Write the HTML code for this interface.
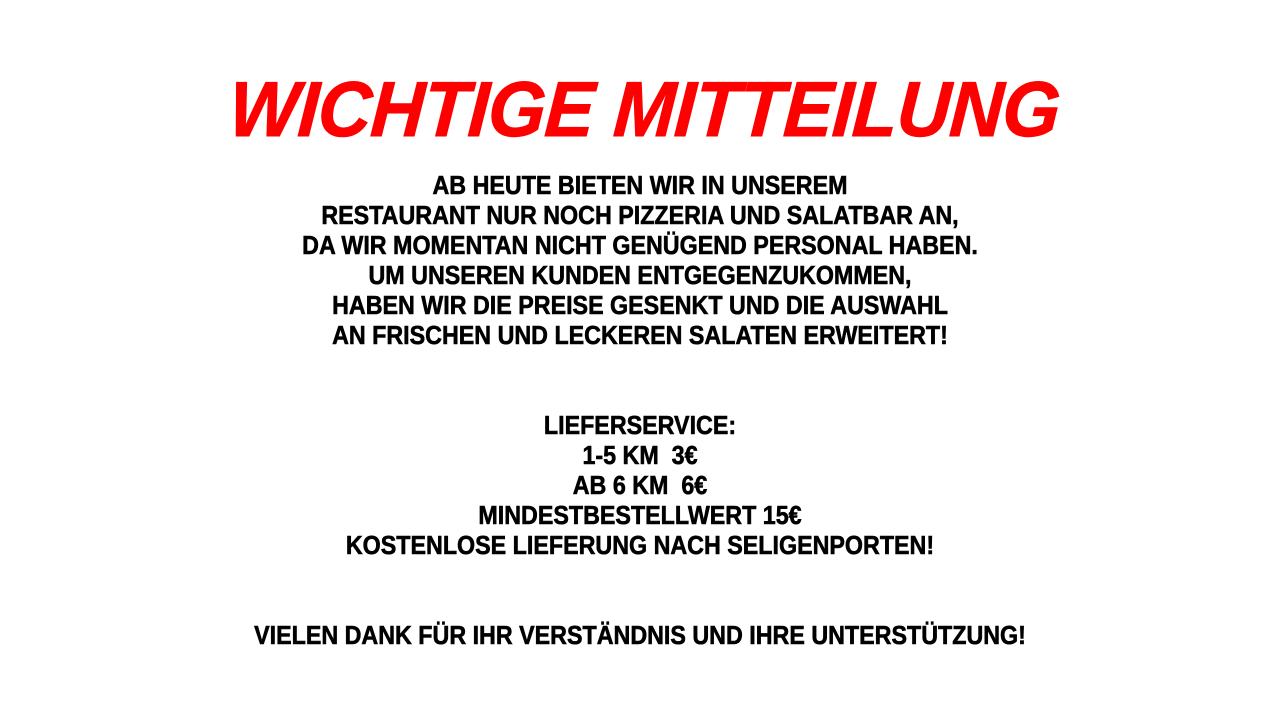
<!DOCTYPE html>
<html><head><meta charset="utf-8"><style>
html,body{margin:0;padding:0;background:#fff;width:1280px;height:720px;overflow:hidden}
.t{position:absolute;left:0;width:1280px;text-align:center;font-family:"Liberation Sans",sans-serif;font-weight:bold;text-transform:uppercase;white-space:nowrap}
#title{top:69px;font-size:78px;line-height:80px;color:#f00;font-style:italic;transform:translateX(7px) scaleX(0.945) skewX(-4deg);transform-origin:645px 0;letter-spacing:-0.5px;-webkit-text-stroke:1px #f00}
#body{top:170px;font-size:26px;line-height:30px;color:#000;transform:translateX(0px) scaleX(0.895);transform-origin:640px 0;-webkit-text-stroke:0.6px #000}
</style></head><body>
<div class="t" id="title">Wichtige Mitteilung</div>
<div class="t" id="body">Ab heute bieten wir in unserem<br>Restaurant nur noch Pizzeria und Salatbar an,<br>da wir momentan nicht genügend Personal haben.<br>Um unseren Kunden entgegenzukommen,<br>haben wir die Preise gesenkt und die Auswahl<br>an frischen und leckeren Salaten erweitert!<br><br><br>Lieferservice:<br>1-5 km&nbsp; 3€<br>ab 6 km&nbsp; 6€<br>Mindestbestellwert 15€<br>Kostenlose Lieferung nach Seligenporten!<br><br><br>Vielen Dank für Ihr Verständnis und Ihre Unterstützung!</div>
</body></html>
